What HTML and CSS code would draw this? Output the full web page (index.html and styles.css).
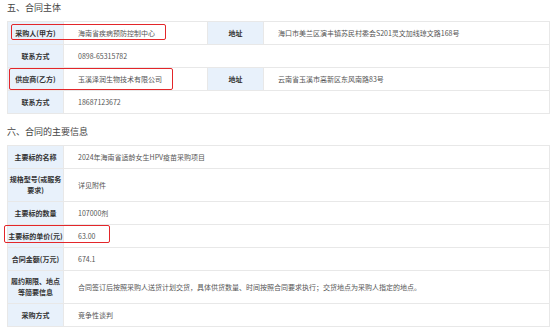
FILE: index.html
```html
<!DOCTYPE html>
<html lang="zh">
<head>
<meta charset="utf-8">
<link rel="stylesheet" href="styles.css">
</head>
<body>
<div class="page">
  <h2 class="sec-title">五、合同主体</h2>
  <table class="info t4">
    <colgroup><col class="c-lab"><col class="c-val1"><col class="c-lab"><col></colgroup>
    <tr><td class="lab">采购人(甲方)</td><td class="val">海南省疾病预防控制中心</td><td class="lab">地址</td><td class="val">海口市美兰区演丰镇苏民村委会S201灵文加线琼文路168号</td></tr>
    <tr><td class="lab">联系方式</td><td class="val" colspan="3">0898-65315782</td></tr>
    <tr><td class="lab">供应商(乙方)</td><td class="val">玉溪泽润生物技术有限公司</td><td class="lab">地址</td><td class="val">云南省玉溪市高新区东风南路83号</td></tr>
    <tr><td class="lab">联系方式</td><td class="val" colspan="3">18687123672</td></tr>
  </table>

  <h2 class="sec-title sec-2">六、合同的主要信息</h2>
  <table class="info t2">
    <colgroup><col class="c-lab"><col></colgroup>
    <tr><td class="lab">主要标的名称</td><td class="val">2024年海南省适龄女生HPV疫苗采购项目</td></tr>
    <tr><td class="lab">规格型号(或服务<br>要求)</td><td class="val">详见附件</td></tr>
    <tr><td class="lab">主要标的数量</td><td class="val">107000剂</td></tr>
    <tr><td class="lab">主要标的单价(元)</td><td class="val">63.00</td></tr>
    <tr><td class="lab">合同金额(万元)</td><td class="val">674.1</td></tr>
    <tr><td class="lab">履约期限、地点<br>等简要信息</td><td class="val">合同签订后按照采购人送货计划交货，具体供货数量、时间按照合同要求执行；交货地点为采购人指定的地点。</td></tr>
    <tr><td class="lab">采购方式</td><td class="val">竞争性谈判</td></tr>
  </table>

  <div class="mark mark-1"></div>
  <div class="mark mark-2"></div>
  <div class="mark mark-3"></div>
</div>
</body>
</html>
```

FILE: styles.css
```css
html, body {
  margin: 0;
  padding: 0;
  background: #ffffff;
}
.page {
  position: relative;
  padding: 0 3px 0 7px;
  font-family: "Noto Sans CJK SC", "Noto Sans", sans-serif;
  color: #333;
}
.sec-title {
  margin: 0;
  padding: 0 0 6px 0;
  font-size: 9px;
  line-height: 15px;
  font-weight: normal;
  color: #444;
}
.sec-2 {
  margin-top: 10px;
}
.info {
  width: 543px;
  border-collapse: collapse;
  table-layout: fixed;
  border: 1px solid #e6e6e6;
}
.c-lab { width: 56px; }
.c-val1 { width: 144px; }
.info td {
  border: 1px solid #e8e8e8;
  height: 12px;
  padding: 5px 0;
  font-size: 7px;
  line-height: 11px;
  vertical-align: middle;
}
.info td.lab {
  background: #e8f1fb;
  text-align: center;
  color: #333;
  font-weight: bold;
  white-space: nowrap;
  padding: 5px 0;
}
.info td.val {
  padding-left: 14px;
  padding-right: 6px;
  color: #555;
  background: #fff;
}
.mark {
  position: absolute;
  border: 1.5px solid #e3262a;
  border-radius: 2px;
}
.mark-1 { left: 11px; top: 24px; width: 153px; height: 14px; }
.mark-2 { left: 9px; top: 68px; width: 162px; height: 20px; }
.mark-3 { left: 4px; top: 225px; width: 104px; height: 16px; }
```
